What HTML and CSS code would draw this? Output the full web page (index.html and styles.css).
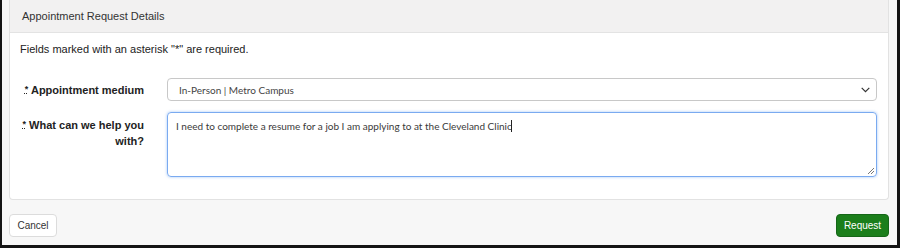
FILE: index.html
```html
<!DOCTYPE html>
<html>
<head>
<meta charset="utf-8">
<link rel="stylesheet" href="styles.css">
</head>
<body>
<div class="page">
  <div class="panel">
    <div class="panel-header">Appointment Request Details</div>
    <div class="panel-body">
      <p class="note">Fields marked with an asterisk "*" are required.</p>
      <div class="form">
        <label class="label label-mid"><abbr>*</abbr> Appointment medium</label>
        <div class="select">
          <span>In-Person | Metro Campus</span>
          <svg class="chev" width="9" height="6" viewBox="0 0 9 6"><path d="M0.7 0.9 L4.5 4.7 L8.3 0.9" fill="none" stroke="#333" stroke-width="1.2"/></svg>
        </div>
        <label class="label label-top"><abbr>*</abbr> What can we help you with?</label>
        <div class="textarea">
          <span>I need to complete a resume for a job I am applying to at the Cleveland Clinic</span><span class="caret"></span>
          <svg class="grip" width="8" height="8" viewBox="0 0 8 8"><path d="M7 1 L1 7 M7 4 L4 7" stroke="#777" stroke-width="1"/></svg>
        </div>
      </div>
    </div>
  </div>
  <div class="footer">
    <button class="btn btn-default">Cancel</button>
    <button class="btn btn-primary">Request</button>
  </div>
</div>
</body>
</html>
```
FILE: styles.css
```css
html, body {
  margin: 0;
  padding: 0;
}
body {
  font-family: "Liberation Sans", Arial, sans-serif;
  color: #222;
}
.page {
  width: 900px;
  height: 248px;
  box-sizing: border-box;
  background: #f7f7f7;
  border-left: 2px solid #141414;
  border-right: 3px solid #141414;
  border-bottom: 3px solid #141414;
  padding: 0 8px 0 7px;
}
.panel {
  background: #fff;
  border: 1px solid #e2e2e2;
  border-top: none;
  border-radius: 0 0 4px 4px;
  height: 200px;
  box-sizing: border-box;
}
.panel-header {
  height: 33px;
  box-sizing: border-box;
  background: #f2f1f1;
  border-bottom: 1px solid #e3e3e3;
  padding: 9px 0 0 12px;
  font-size: 11px;
  line-height: 14px;
  color: #333;
}
.panel-body {
  padding: 9px 11px 0 10px;
}
.note {
  margin: 0 0 22px 0;
  font-size: 11px;
  line-height: 14px;
  color: #222;
}
.form {
  display: grid;
  grid-template-columns: 124px 1fr;
  column-gap: 23px;
  row-gap: 11px;
}
.label {
  text-align: right;
  font-weight: bold;
  font-size: 11px;
  line-height: 16px;
  color: #222;
}
.label abbr {
  text-decoration: underline dotted;
  font-size: 9px;
  vertical-align: 2px;
}
.label-mid {
  align-self: center;
}
.label-top {
  padding-top: 4px;
}
.select {
  height: 23px;
  box-sizing: border-box;
  border: 1px solid #c8c8c8;
  border-radius: 4px;
  display: flex;
  align-items: center;
  justify-content: space-between;
  padding: 0 6px 0 11px;
  font-family: Lato, "Liberation Sans", sans-serif;
  font-size: 10px;
  color: #444;
}
.textarea {
  position: relative;
  height: 65px;
  box-sizing: border-box;
  border: 1px solid #7aaaf0;
  border-radius: 4px;
  box-shadow: 0 0 3px rgba(102, 160, 240, 0.6);
  padding: 6px 8px;
  font-family: Lato, "Liberation Sans", sans-serif;
  font-size: 10px;
  line-height: 14px;
  color: #3a3a3a;
}
.caret {
  display: inline-block;
  width: 1px;
  height: 12px;
  background: #222;
  vertical-align: -2px;
  margin-left: -1px;
}
.grip {
  position: absolute;
  right: 1px;
  bottom: 1px;
}
.footer {
  display: flex;
  justify-content: space-between;
  padding: 14px 0 0 0;
}
.btn {
  height: 23px;
  box-sizing: border-box;
  border-radius: 4px;
  font-family: "Liberation Sans", Arial, sans-serif;
  font-size: 10px;
  padding: 0;
  cursor: pointer;
}
.btn-default {
  background: #fff;
  border: 1px solid #dcdcdc;
  color: #333;
  width: 48px;
}
.btn-primary {
  background: #1b7e1b;
  border: 1px solid #156618;
  color: #fff;
  width: 53px;
}
```
